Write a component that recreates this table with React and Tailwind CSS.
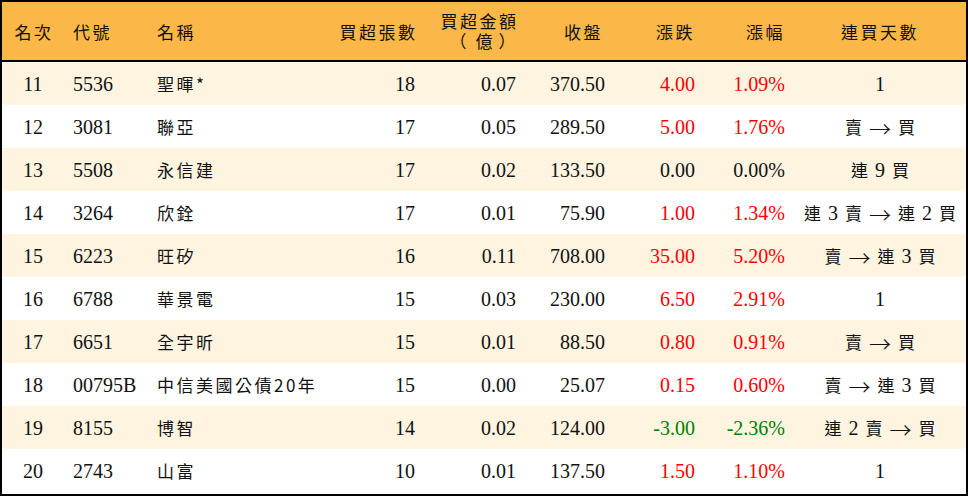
import React from "react";

const rows = [
  ["11", "5536", "聖暉*", "18", "0.07", "370.50", "4.00", "1.09%", "1", "up"],
  ["12", "3081", "聯亞", "17", "0.05", "289.50", "5.00", "1.76%", "賣 → 買", "up"],
  ["13", "5508", "永信建", "17", "0.02", "133.50", "0.00", "0.00%", "連 9 買", "flat"],
  ["14", "3264", "欣銓", "17", "0.01", "75.90", "1.00", "1.34%", "連 3 賣 → 連 2 買", "up"],
  ["15", "6223", "旺矽", "16", "0.11", "708.00", "35.00", "5.20%", "賣 → 連 3 買", "up"],
  ["16", "6788", "華景電", "15", "0.03", "230.00", "6.50", "2.91%", "1", "up"],
  ["17", "6651", "全宇昕", "15", "0.01", "88.50", "0.80", "0.91%", "賣 → 買", "up"],
  ["18", "00795B", "中信美國公債20年", "15", "0.00", "25.07", "0.15", "0.60%", "賣 → 連 3 買", "up"],
  ["19", "8155", "博智", "14", "0.02", "124.00", "-3.00", "-2.36%", "連 2 賣 → 買", "down"],
  ["20", "2743", "山富", "10", "0.01", "137.50", "1.50", "1.10%", "1", "up"],
];

const cols = "grid grid-cols-[62px_84px_182px_85px_101px_89px_90px_90px_181px]";
const num = "font-['Liberation_Serif',serif] text-[20px] leading-none";
const cjk = "font-['Noto_Sans_CJK_TC',sans-serif] text-[17px] tracking-[2.5px] leading-none";

const isCjk = (s) => /[\u4e00-\u9fff]/.test(s);

function Streak({ text }) {
  return (
    <div className="flex items-center justify-center gap-[7px]">
      {text.split(" ").map((t, i) =>
        isCjk(t) ? (
          <span key={i} className="font-['Noto_Sans_CJK_TC',sans-serif] text-[17px] leading-none">
            {t}
          </span>
        ) : t === "→" ? (
          <span key={i} className="font-['Noto_Sans_CJK_TC',sans-serif] font-light text-[22px] leading-none">
            {t}
          </span>
        ) : (
          <span key={i} className={num}>
            {t}
          </span>
        )
      )}
    </div>
  );
}

export default function App() {
  return (
    <div className="w-[968px] h-[496px] border-2 border-black bg-white text-[#111]">
      {/* header */}
      <div className={`${cols} h-[60px] items-center bg-[#fbb748] border-b-2 border-black`}>
        <div className={`${cjk} text-center pl-[2px]`}>名次</div>
        <div className={`${cjk} pl-[9px]`}>代號</div>
        <div className={`${cjk} pl-[9px]`}>名稱</div>
        <div className={`${cjk} text-right -mr-[2.5px]`}>買超張數</div>
        <div className="flex justify-end -mr-[2.5px]">
          <div className={`${cjk} flex flex-col items-center gap-[4px]`}>
            <div className="leading-[16px]">買超金額</div>
            <div className="leading-[16px] tracking-normal pl-[6px]">
              <span className="mr-[9px]">（</span>億<span className="ml-[6px]">）</span>
            </div>
          </div>
        </div>
        <div className={`${cjk} text-right pr-[2px]`}>收盤</div>
        <div className={`${cjk} text-right`}>漲跌</div>
        <div className={`${cjk} text-right`}>漲幅</div>
        <div className={`${cjk} text-center pl-[9px]`}>連買天數</div>
      </div>

      {rows.map((r, i) => {
        const color =
          r[9] === "up" ? "text-[#ff0000]" : r[9] === "down" ? "text-[#008000]" : "";
        return (
          <div
            key={r[0]}
            className={`${cols} h-[43px] items-center ${i % 2 === 0 ? "bg-[#fef4e0]" : "bg-white"}`}
          >
            <div className={`${num} text-center`}>{r[0]}</div>
            <div className={`${num} pl-[9px]`}>{r[1]}</div>
            <div className={`${cjk} pl-[9px]`}>{r[2]}</div>
            <div className={`${num} text-right`}>{r[3]}</div>
            <div className={`${num} text-right`}>{r[4]}</div>
            <div className={`${num} text-right`}>{r[5]}</div>
            <div className={`${num} text-right ${color}`}>{r[6]}</div>
            <div className={`${num} text-right ${color}`}>{r[7]}</div>
            <div className="pl-[9px]">
              <Streak text={r[8]} />
            </div>
          </div>
        );
      })}
    </div>
  );
}
